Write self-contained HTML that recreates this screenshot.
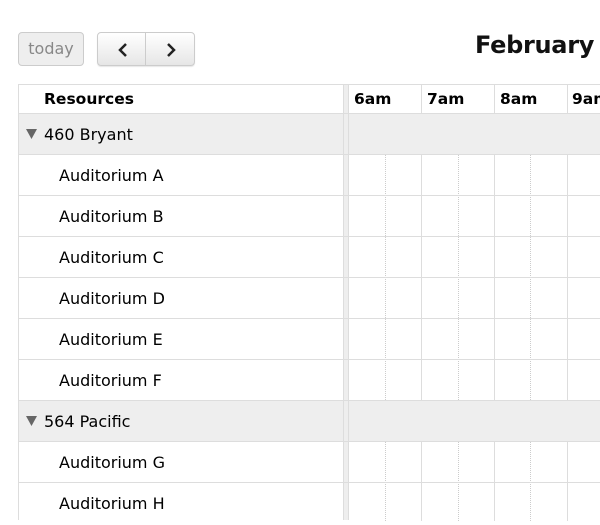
<!DOCTYPE html>
<html><head><style>
*{box-sizing:border-box;margin:0;padding:0}
body{width:600px;height:520px;overflow:hidden;background:#fff;font-family:"DejaVu Sans",sans-serif;color:#000;position:relative}
.btn{position:absolute;top:32px;height:34px;border:1px solid #ccc;border-radius:4px;background:linear-gradient(#fff,#e6e6e6);box-shadow:0 1px 1px rgba(0,0,0,.1)}
.a{position:absolute}
.h{position:absolute;background:#ddd}
.t{position:absolute;font-size:16px;line-height:43px}
.b{position:absolute;font-size:15.5px;font-weight:bold;line-height:22px;top:88px}
</style></head><body>
<div class="btn" style="left:18px;width:66px;background:#eee;color:#888;font-size:16px;text-align:center;line-height:32px;box-shadow:none">today</div>
<div class="btn" style="left:97px;width:98px"></div>
<div class="a" style="left:145px;top:33px;width:1px;height:32px;background:#ccc"></div>
<svg class="a" style="left:112px;top:40px" width="70" height="20"><path d="M14 4 L8 10 L14 16" fill="none" stroke="#222" stroke-width="2.5"/><path d="M56 4 L62 10 L56 16" fill="none" stroke="#222" stroke-width="2.5"/></svg>
<div class="a" style="left:475px;top:31px;font-size:24px;font-weight:bold;color:#111;letter-spacing:-0.3px">February</div>

<div class="a" style="left:18px;top:113px;width:582px;height:41px;background:#eee"></div>
<div class="a" style="left:18px;top:400px;width:582px;height:41px;background:#eee"></div>
<div class="a" style="left:343px;top:84px;width:6px;height:436px;background:#eee"></div>

<div class="a" style="left:385px;top:154px;height:246px;border-left:1px dotted #ccc"></div>
<div class="a" style="left:458px;top:154px;height:246px;border-left:1px dotted #ccc"></div>
<div class="a" style="left:530px;top:154px;height:246px;border-left:1px dotted #ccc"></div>
<div class="a" style="left:385px;top:441px;height:80px;border-left:1px dotted #ccc"></div>
<div class="a" style="left:458px;top:441px;height:80px;border-left:1px dotted #ccc"></div>
<div class="a" style="left:530px;top:441px;height:80px;border-left:1px dotted #ccc"></div>

<div class="h" style="left:18px;top:84px;width:582px;height:1px"></div>
<div class="h" style="left:18px;top:113px;width:582px;height:1px"></div>
<div class="h" style="left:18px;top:154px;width:582px;height:1px"></div>
<div class="h" style="left:18px;top:195px;width:582px;height:1px"></div>
<div class="h" style="left:18px;top:236px;width:582px;height:1px"></div>
<div class="h" style="left:18px;top:277px;width:582px;height:1px"></div>
<div class="h" style="left:18px;top:318px;width:582px;height:1px"></div>
<div class="h" style="left:18px;top:359px;width:582px;height:1px"></div>
<div class="h" style="left:18px;top:400px;width:582px;height:1px"></div>
<div class="h" style="left:18px;top:441px;width:582px;height:1px"></div>
<div class="h" style="left:18px;top:482px;width:582px;height:1px"></div>
<div class="h" style="left:18px;top:84px;width:1px;height:436px"></div>
<div class="h" style="left:343px;top:84px;width:1px;height:436px"></div>
<div class="h" style="left:348px;top:84px;width:1px;height:436px"></div>
<div class="h" style="left:421px;top:84px;width:1px;height:29px"></div>
<div class="h" style="left:494px;top:84px;width:1px;height:29px"></div>
<div class="h" style="left:567px;top:84px;width:1px;height:29px"></div>
<div class="h" style="left:421px;top:154px;width:1px;height:246px"></div>
<div class="h" style="left:494px;top:154px;width:1px;height:246px"></div>
<div class="h" style="left:567px;top:154px;width:1px;height:246px"></div>
<div class="h" style="left:421px;top:441px;width:1px;height:80px"></div>
<div class="h" style="left:494px;top:441px;width:1px;height:80px"></div>
<div class="h" style="left:567px;top:441px;width:1px;height:80px"></div>

<div class="b" style="left:44px">Resources</div>
<div class="b" style="left:354px">6am</div>
<div class="b" style="left:427px">7am</div>
<div class="b" style="left:500px">8am</div>
<div class="b" style="left:572px">9am</div>

<svg class="a" style="left:26px;top:128px" width="12" height="12"><path d="M0 1 H11 L5.5 11 Z" fill="#666"/></svg>
<div class="t" style="left:44px;top:113px">460 Bryant</div>
<div class="t" style="left:59px;top:154px">Auditorium A</div>
<div class="t" style="left:59px;top:195px">Auditorium B</div>
<div class="t" style="left:59px;top:236px">Auditorium C</div>
<div class="t" style="left:59px;top:277px">Auditorium D</div>
<div class="t" style="left:59px;top:318px">Auditorium E</div>
<div class="t" style="left:59px;top:359px">Auditorium F</div>
<svg class="a" style="left:26px;top:415px" width="12" height="12"><path d="M0 1 H11 L5.5 11 Z" fill="#666"/></svg>
<div class="t" style="left:44px;top:400px">564 Pacific</div>
<div class="t" style="left:59px;top:441px">Auditorium G</div>
<div class="t" style="left:59px;top:482px">Auditorium H</div>
</body></html>
